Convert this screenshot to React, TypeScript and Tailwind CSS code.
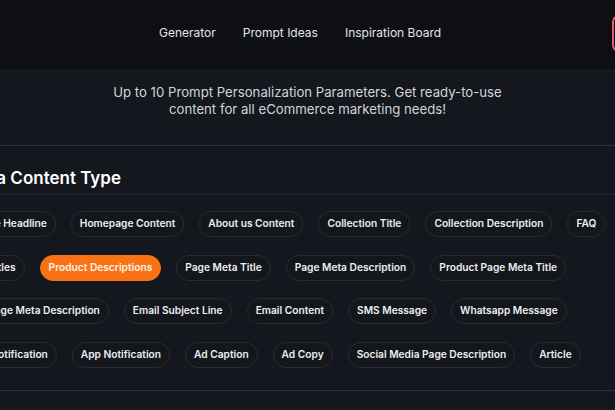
import React from 'react';

const rows: string[] = [
  'Homepage Headline',
  'Homepage Content',
  'About us Content',
  'Collection Title',
  'Collection Description',
  'FAQ',
  'Product Titles',
  'Product Descriptions',
  'Page Meta Title',
  'Page Meta Description',
  'Product Page Meta Title',
  'Product Page Meta Description',
  'Email Subject Line',
  'Email Content',
  'SMS Message',
  'Whatsapp Message',
  'Browser Notification',
  'App Notification',
  'Ad Caption',
  'Ad Copy',
  'Social Media Page Description',
  'Article',
];

const App: React.FC = () => {
  const active = 'Product Descriptions';

  return (
    <div
      className="w-[615px] h-[410px] overflow-hidden bg-[#14171d] text-[#e5e7eb]"
      style={{ fontFamily: 'Inter, "Noto Sans", sans-serif' }}
    >
      {/* top nav */}
      <header className="h-[69px] bg-[#0e0f13] flex items-center">
        <nav className="ml-[159px] mb-[4px] flex items-center gap-[27px] text-[12px] text-[#e4e4e7]">
          <a>Generator</a>
          <a>Prompt Ideas</a>
          <a>Inspiration Board</a>
        </nav>
        <button className="ml-auto mr-[-77px] mb-[2px] w-[80px] h-[37px] rounded-[7px] border-2 border-[#e4577b] text-[12px] text-white">
          Sign in
        </button>
      </header>

      {/* intro */}
      <div className="pt-[15px] pb-[27px] border-b border-[#2b323d]">
        <p className="text-center text-[13.2px] leading-[17px] text-[#d4d4d8]">
          Up to 10 Prompt Personalization Parameters. Get ready-to-use
          <br />
          content for all eCommerce marketing needs!
        </p>
      </div>

      <section className="ml-[-62px] w-[760px]">
        <div className="pt-[22px] pb-[6px] border-b border-[#222730]">
          <h2 className="ml-[-9px] text-[17px] leading-[20px] font-semibold text-white">Choose a Content Type</h2>
        </div>
        <div className="w-[696px] pt-[16px] pb-[22px] flex flex-wrap gap-x-[15px] gap-y-[17.5px]">
          {rows.map(item => (
            <button
              key={item}
              className={`h-[26px] px-[8px] rounded-full border text-[10.2px] font-semibold whitespace-nowrap
                ${item === active ? 'bg-[#f97316] border-[#f97316] text-[#fff1e6]' : 'bg-[#13161b] border-[#262b34] text-[#eceef1]'}
              `}
            >
              {item}
            </button>
          ))}
        </div>
        <div className="border-t border-[#2b323d]" />
      </section>
    </div>
  );
};

export default App;
